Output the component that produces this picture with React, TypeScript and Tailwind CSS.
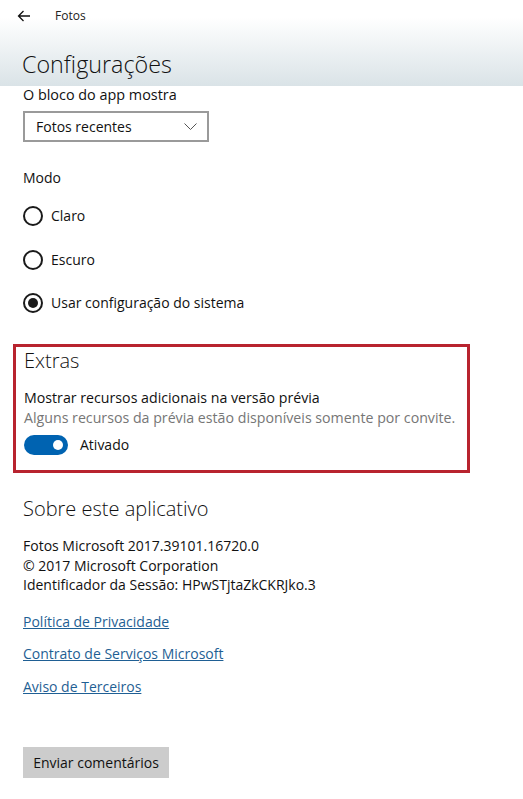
import React from "react";

function Radio({ label, checked }: { label: string; checked?: boolean }) {
  return (
    <div className="flex items-center h-[20px]">
      <span className="w-[20px] h-[20px] rounded-full border-2 border-[#1a1a1a] flex items-center justify-center shrink-0">
        {checked && <span className="w-[10px] h-[10px] rounded-full bg-[#1a1a1a]" />}
      </span>
      <span className="ml-[8px] text-[14px] leading-[20px] text-[#111]">{label}</span>
    </div>
  );
}

export default function App() {
  return (
    <div
      className="w-[523px] h-[799px] bg-white overflow-hidden text-[#111]"
      style={{ fontFamily: '"Segoe UI", "Open Sans", "Noto Sans", sans-serif' }}
    >
      {/* header */}
      <div className="h-[86px] bg-gradient-to-b from-white from-[20%] to-[#dae3e7]">
        <div className="flex items-center h-[32px] pl-[17px]">
          <svg width="14" height="12" viewBox="0 0 14 12" fill="none" stroke="#111" strokeWidth="1.3">
            <path d="M13 6H1.5M6.5 1L1.5 6L6.5 11" />
          </svg>
          <span className="ml-[24px] text-[12px] text-[#222]">Fotos</span>
        </div>
        <div className="pl-[22px] pt-[17px] text-[23.3px] leading-[31px] font-light text-[#111]">
          Configurações
        </div>
      </div>

      <div className="px-[23px]">
        <div className="text-[14.4px] leading-[18px]">O bloco do app mostra</div>
        <div className="mt-[7px] w-[186px] h-[31px] border-2 border-[#9a9a9a] flex items-center justify-between pl-[11px] pr-[10px]">
          <span className="text-[14px]">Fotos recentes</span>
          <svg width="13" height="8" viewBox="0 0 13 8" fill="none" stroke="#555" strokeWidth="1">
            <path d="M0.5 0.5L6.5 6.5L12.5 0.5" />
          </svg>
        </div>

        <div className="mt-[26px] text-[14px] leading-[20px]">Modo</div>
        <div className="mt-[18px] flex flex-col gap-[23.5px]">
          <Radio label="Claro" />
          <Radio label="Escuro" />
          <Radio label="Usar configuração do sistema" checked />
        </div>
      </div>

      {/* Extras boxed */}
      <div className="mt-[31px] ml-[13px] w-[457px] h-[129px] border-[3px] border-[#b8232f] pl-[8px] pt-[1px]">
        <div className="text-[20px] leading-[26px] font-light">Extras</div>
        <div className="mt-[14px] text-[14.2px] leading-[20px]">Mostrar recursos adicionais na versão prévia</div>
        <div className="text-[14.2px] leading-[20px] text-[#767676]">
          Alguns recursos da prévia estão disponíveis somente por convite.
        </div>
        <div className="mt-[6px] flex items-center">
          <span className="w-[44px] h-[20px] rounded-full bg-[#0063b1] flex items-center justify-end pr-[5px]">
            <span className="w-[10px] h-[10px] rounded-full bg-white" />
          </span>
          <span className="ml-[12px] text-[14px]">Ativado</span>
        </div>
      </div>

      <div className="px-[23px]">
        <div className="mt-[22px] text-[20px] leading-[28px] font-light">Sobre este aplicativo</div>
        <div className="mt-[13px] text-[14px] leading-[19.5px]">
          <div>Fotos Microsoft 2017.39101.16720.0</div>
          <div>© 2017 Microsoft Corporation</div>
          <div>Identificador da Sessão: HPwSTjtaZkCKRJko.3</div>
        </div>
        <div className="mt-[17px] flex flex-col gap-[12.5px] text-[14px] leading-[20px] text-[#1f5f94]">
          <span className="underline">Política de Privacidade</span>
          <span className="underline">Contrato de Serviços Microsoft</span>
          <span className="underline">Aviso de Terceiros</span>
        </div>
        <div className="mt-[50px] w-[146px] h-[31px] bg-[#cccccc] flex items-center justify-center text-[14px]">
          Enviar comentários
        </div>
      </div>
    </div>
  );
}
